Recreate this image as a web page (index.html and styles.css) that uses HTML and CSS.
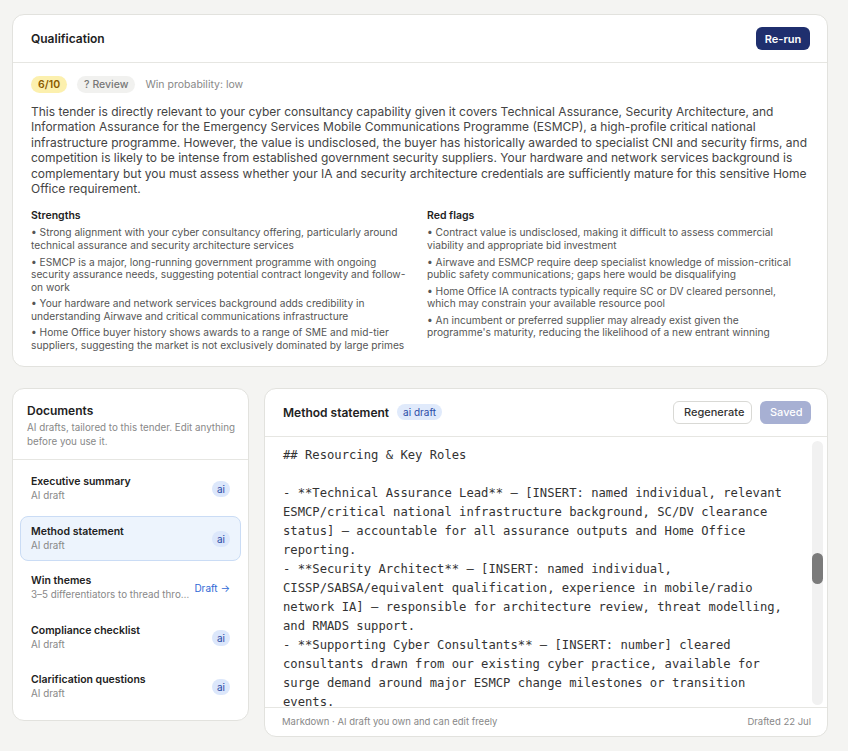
FILE: index.html
```html
<!DOCTYPE html>
<html lang="en">

<head>
    <meta charset="UTF-8">
    <meta name="viewport" content="width=device-width, initial-scale=1.0">
    <title>Tender workspace</title>

    <link rel="stylesheet" href="styles.css">
</head>

<body>
    <div class="page">
        <section class="card qual">
            <header class="card-head">
                <h2>Qualification</h2>
                <button class="btn btn-primary">Re-run</button>
            </header>
            <div class="qual-body">
                <div class="meta">
                    <span class="pill pill-score">6/10</span>
                    <span class="pill pill-review">? Review</span>
                    <span class="meta-text">Win probability: low</span>
                </div>
                <p class="summary">This tender is directly relevant to your cyber consultancy capability given it covers Technical Assurance, Security Architecture, and Information Assurance for the Emergency Services Mobile Communications Programme (ESMCP), a high-profile critical national infrastructure programme. However, the value is undisclosed, the buyer has historically awarded to specialist CNI and security firms, and competition is likely to be intense from established government security suppliers. Your hardware and network services background is complementary but you must assess whether your IA and security architecture credentials are sufficiently mature for this sensitive Home Office requirement.</p>
                <div class="points">
                    <div class="point-col">
                        <h3>Strengths</h3>
                        <ul>
                            <li>Strong alignment with your cyber consultancy offering, particularly around technical assurance and security architecture services</li>
                            <li>ESMCP is a major, long-running government programme with ongoing security assurance needs, suggesting potential contract longevity and follow-on work</li>
                            <li>Your hardware and network services background adds credibility in understanding Airwave and critical communications infrastructure</li>
                            <li>Home Office buyer history shows awards to a range of SME and mid-tier suppliers, suggesting the market is not exclusively dominated by large primes</li>
                        </ul>
                    </div>
                    <div class="point-col">
                        <h3>Red flags</h3>
                        <ul>
                            <li>Contract value is undisclosed, making it difficult to assess commercial viability and appropriate bid investment</li>
                            <li>Airwave and ESMCP require deep specialist knowledge of mission-critical public safety communications; gaps here would be disqualifying</li>
                            <li>Home Office IA contracts typically require SC or DV cleared personnel, which may constrain your available resource pool</li>
                            <li>An incumbent or preferred supplier may already exist given the programme's maturity, reducing the likelihood of a new entrant winning</li>
                        </ul>
                    </div>
                </div>
            </div>
        </section>

        <div class="workspace">
            <aside class="card docs">
                <div class="docs-head">
                    <h2>Documents</h2>
                    <p>AI drafts, tailored to this tender. Edit anything before you use it.</p>
                </div>
                <ul class="doc-list">
                    <li class="doc-item">
                        <div class="doc-text">
                            <span class="doc-name">Executive summary</span>
                            <span class="doc-sub">AI draft</span>
                        </div>
                        <span class="ai-tag">ai</span>
                    </li>
                    <li class="doc-item active">
                        <div class="doc-text">
                            <span class="doc-name">Method statement</span>
                            <span class="doc-sub">AI draft</span>
                        </div>
                        <span class="ai-tag">ai</span>
                    </li>
                    <li class="doc-item">
                        <div class="doc-text">
                            <span class="doc-name">Win themes</span>
                            <span class="doc-sub">3–5 differentiators to thread thro…</span>
                        </div>
                        <a class="draft-link" href="#">Draft →</a>
                    </li>
                    <li class="doc-item">
                        <div class="doc-text">
                            <span class="doc-name">Compliance checklist</span>
                            <span class="doc-sub">AI draft</span>
                        </div>
                        <span class="ai-tag">ai</span>
                    </li>
                    <li class="doc-item">
                        <div class="doc-text">
                            <span class="doc-name">Clarification questions</span>
                            <span class="doc-sub">AI draft</span>
                        </div>
                        <span class="ai-tag">ai</span>
                    </li>
                </ul>
            </aside>

            <section class="card editor">
                <header class="card-head editor-head">
                    <div class="editor-title">
                        <h2>Method statement</h2>
                        <span class="pill pill-ai">ai draft</span>
                    </div>
                    <div class="actions">
                        <button class="btn btn-outline">Regenerate</button>
                        <button class="btn btn-saved">Saved</button>
                    </div>
                </header>
                <div class="editor-body">
<pre class="markdown">## Resourcing &amp; Key Roles

- **Technical Assurance Lead** — [INSERT: named individual, relevant
ESMCP/critical national infrastructure background, SC/DV clearance
status] — accountable for all assurance outputs and Home Office
reporting.
- **Security Architect** — [INSERT: named individual,
CISSP/SABSA/equivalent qualification, experience in mobile/radio
network IA] — responsible for architecture review, threat modelling,
and RMADS support.
- **Supporting Cyber Consultants** — [INSERT: number] cleared
consultants drawn from our existing cyber practice, available for
surge demand around major ESMCP change milestones or transition
events.</pre>
                    <div class="scroll-track"><div class="scroll-thumb"></div></div>
                </div>
                <footer class="editor-foot">
                    <span>Markdown · AI draft you own and can edit freely</span>
                    <span>Drafted 22 Jul</span>
                </footer>
            </section>
        </div>
    </div>
</body>

</html>
```

FILE: styles.css
```css
body {
    font-family: Inter, "Noto Sans", sans-serif;
    margin: 0;
    padding: 0;
    background-color: #f4f4f2;
    color: #222;
}

.page {
    padding: 14px 20px 14px 12px;
}

.card {
    background-color: #fff;
    border: 1px solid #e2e2de;
    border-radius: 12px;
}

.card-head {
    display: flex;
    justify-content: space-between;
    align-items: center;
    height: 47px;
    padding: 0 17px 0 18px;
    border-bottom: 1px solid #e6e6e2;
}

h2 {
    margin: 0;
    font-size: 12px;
    font-weight: 600;
    color: #222;
}

.btn {
    font-family: inherit;
    font-size: 11px;
    font-weight: 500;
    height: 23px;
    padding: 0 10px;
    border-radius: 6px;
    border: none;
    cursor: pointer;
}

.btn-primary {
    background-color: #1f2f6e;
    color: #fff;
    font-weight: 600;
    width: 54px;
    padding: 0;
}

.btn-outline {
    background-color: #fff;
    color: #333;
    border: 1px solid #d9d9d5;
    width: 79px;
}

.btn-saved {
    background-color: #a7b0d3;
    color: #fff;
    width: 51px;
}

.pill {
    display: inline-flex;
    align-items: center;
    height: 17px;
    padding: 0 7px;
    border-radius: 999px;
    font-size: 10.5px;
}

/* qualification */

.qual-body {
    padding: 13px 18px 10px 18px;
}

.meta {
    display: flex;
    align-items: center;
    gap: 10px;
}

.pill-score {
    background-color: #fcf0ae;
    color: #8a5a00;
    font-weight: 600;
}

.pill-review {
    background-color: #f1f1ef;
    color: #777;
    font-weight: 500;
}

.meta-text {
    font-size: 10.5px;
    color: #888;
}

.summary {
    margin: 11px 0 0;
    font-size: 12px;
    line-height: 15.4px;
    color: #444;
}

.points {
    display: grid;
    grid-template-columns: 382px 1fr;
    gap: 14px;
    margin: 13px 12px 0 0;
}

h3 {
    margin: 0 0 3px;
    font-size: 10.5px;
    line-height: 14px;
    font-weight: 600;
    color: #222;
}

.points ul {
    list-style: none;
    margin: 0;
    padding: 0;
}

.points li {
    font-size: 10.2px;
    line-height: 12.7px;
    color: #555;
    margin-bottom: 3.7px;
}

.points li::before {
    content: "\2022\00a0";
}

/* lower area */

.workspace {
    display: grid;
    grid-template-columns: 237px 1fr;
    gap: 15px;
    margin-top: 21px;
    align-items: start;
}

.docs-head {
    padding: 14px 10px 10px 14px;
    border-bottom: 1px solid #e6e6e2;
}

.docs-head p {
    margin: 3px 0 0;
    font-size: 9.8px;
    line-height: 14px;
    color: #888;
}

.doc-list {
    list-style: none;
    margin: 0;
    padding: 7px 7px 10px;
    display: flex;
    flex-direction: column;
    gap: 4.5px;
}

.doc-item {
    display: flex;
    align-items: center;
    gap: 8px;
    padding: 7.5px 10px;
    border: 1px solid transparent;
    border-radius: 8px;
}

.doc-item.active {
    background-color: #edf4fd;
    border-color: #cadcf5;
}

.doc-text {
    display: flex;
    flex-direction: column;
    flex: 1;
    min-width: 0;
}

.doc-name {
    font-size: 10.5px;
    line-height: 14px;
    font-weight: 600;
    color: #222;
}

.doc-sub {
    font-size: 9.8px;
    line-height: 14px;
    color: #888;
    white-space: nowrap;
}

.ai-tag {
    display: inline-flex;
    align-items: center;
    justify-content: center;
    width: 18px;
    height: 16px;
    border-radius: 999px;
    background-color: #dce7fb;
    color: #2a4aa6;
    font-size: 10px;
}

.draft-link {
    font-size: 10px;
    color: #2f6ad6;
    text-decoration: none;
    white-space: nowrap;
}

/* editor */

.editor-head {
    padding-right: 16px;
}

.editor-title {
    display: flex;
    align-items: center;
    gap: 8px;
}

.pill-ai {
    height: 16px;
    font-size: 10px;
    padding: 0 6px;
    background-color: #e0eafb;
    color: #2a4aa6;
}

.actions {
    display: flex;
    gap: 8px;
}

.editor-body {
    display: flex;
    height: 270px;
    border-bottom: 1px solid #e6e6e2;
}

.markdown {
    flex: 1;
    margin: 0;
    padding: 9px 0 0 18px;
    overflow: hidden;
    font-family: "DejaVu Sans Mono", "Liberation Mono", monospace;
    font-size: 12.2px;
    line-height: 19px;
    color: #333;
}

.scroll-track {
    width: 11px;
    margin: 4px 4px 2px 0;
    background-color: #f1f1f1;
    border-radius: 6px;
}

.scroll-thumb {
    height: 31px;
    margin-top: 112px;
    background-color: #7b7b7b;
    border-radius: 6px;
}

.editor-foot {
    display: flex;
    justify-content: space-between;
    align-items: center;
    height: 28px;
    padding: 0 16px 0 17px;
    font-size: 9.5px;
    color: #888;
}
```
